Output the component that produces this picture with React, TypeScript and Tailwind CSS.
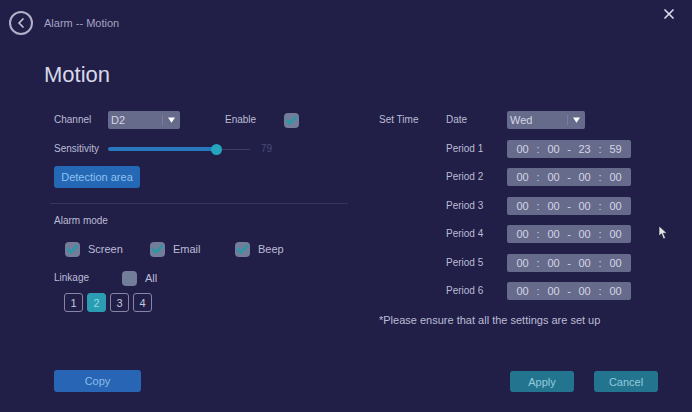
import { useState } from "react"
import type { InputHTMLAttributes } from "react"
import { Check, ChevronLeft, X } from "lucide-react"
import clsx from "clsx"

const days = ["Mon", "Tue", "Wed", "Thu", "Fri", "Sat", "Sun"]
const channels = ["D1", "D2", "D3", "D4"]

const initialPeriods = [
  ["00", "00", "23", "59"],
  ["00", "00", "00", "00"],
  ["00", "00", "00", "00"],
  ["00", "00", "00", "00"],
  ["00", "00", "00", "00"],
  ["00", "00", "00", "00"],
]

const separators = [":", "-", ":"]

function Checkbox(props: InputHTMLAttributes<HTMLInputElement>) {
  return (
    <span className="relative block size-[15px] shrink-0">
      <input type="checkbox" className="peer block size-full appearance-none rounded-[4px] bg-[#727d9a]" {...props} />
      <Check
        className="pointer-events-none absolute inset-0 m-auto hidden size-[13px] text-[#2d97a8] peer-checked:block"
        strokeWidth={5}
      />
    </span>
  )
}

function Select({
  id,
  value,
  options,
  onChange,
  className,
}: {
  id: string
  value: string
  options: string[]
  onChange: (value: string) => void
  className?: string
}) {
  return (
    <div className={clsx("relative", className)}>
      <select
        id={id}
        value={value}
        onChange={(e) => onChange(e.target.value)}
        className="block h-[18px] w-full appearance-none rounded-[2px] bg-[#666a8b] pl-[3px] text-[11px] leading-[18px] text-[#d3d6e6]"
      >
        {options.map((option) => (
          <option key={option}>{option}</option>
        ))}
      </select>
      <span className="pointer-events-none absolute inset-y-1 right-0 flex w-[18px] items-center justify-center border-l border-[#7b7f9e]">
        <svg viewBox="0 0 8 6" className="h-[6px] w-[7px] fill-white">
          <path d="M0 0h8L4 6z" />
        </svg>
      </span>
    </div>
  )
}

export default function App() {
  const [channel, setChannel] = useState("D2")
  const [day, setDay] = useState("Wed")
  const [sensitivity, setSensitivity] = useState(79)
  const [linked, setLinked] = useState([2])
  const [periods, setPeriods] = useState(initialPeriods)

  const toggleLinked = (n: number) => {
    setLinked(linked.includes(n) ? linked.filter((v) => v !== n) : [...linked, n])
  }

  const updatePeriod = (row: number, col: number, value: string) => {
    setPeriods(periods.map((p, r) => (r === row ? p.map((v, c) => (c === col ? value : v)) : p)))
  }

  return (
    <div className="relative flex min-h-screen flex-col bg-[#211f47] font-['Liberation_Sans',Arial,sans-serif] text-[10px] leading-4 text-[#bcbcd6]">
      <header className="flex items-start justify-between pt-[6px] pr-[15px] pl-[9px]">
        <div className="flex items-center gap-[11px] pt-[5px]">
          <button
            aria-label="Back"
            className="flex size-6 items-center justify-center rounded-full border-2 border-[#b0b0cb] text-[#c8c8dd]"
          >
            <ChevronLeft className="mr-px size-4" strokeWidth={2.5} />
          </button>
          <span className="text-[11px] text-[#a5a4c2]">Alarm -- Motion</span>
        </div>
        <button aria-label="Close" className="text-[#dcdcea]">
          <X className="size-4" strokeWidth={2.5} />
        </button>
      </header>

      <h1 className="mt-[26px] ml-11 text-[22px] leading-7 text-[#d8d8ea]">Motion</h1>

      <main className="mt-[22px] flex pr-[34px] pl-[50px]">
        <section className="w-[298px] shrink-0">
          <div className="flex h-[18px] items-center pl-1">
            <label htmlFor="channel" className="w-[54px]">
              Channel
            </label>
            <Select id="channel" className="w-[72px]" value={channel} options={channels} onChange={setChannel} />
            <label htmlFor="enable" className="ml-[45px] w-[59px]">
              Enable
            </label>
            <Checkbox id="enable" defaultChecked />
          </div>

          <div className="mt-3 flex h-4 items-center pl-1">
            <label htmlFor="sensitivity" className="w-[54px]">
              Sensitivity
            </label>
            <span className="relative flex h-4 w-[142px] items-center">
              <span className="h-px w-full bg-[#3d3d6b]" />
              <span
                className="absolute inset-y-[6px] left-0 rounded-full bg-[#2878bd]"
                style={{ width: `${sensitivity}%` }}
              />
              <input
                id="sensitivity"
                type="range"
                value={sensitivity}
                onChange={(e) => setSensitivity(Number(e.target.value))}
                className="absolute inset-0 w-full appearance-none bg-transparent [&::-webkit-slider-thumb]:size-[11px] [&::-webkit-slider-thumb]:appearance-none [&::-webkit-slider-thumb]:rounded-full [&::-webkit-slider-thumb]:bg-[#25a5bd]"
              />
            </span>
            <output htmlFor="sensitivity" className="ml-[11px] text-[#4b4b7c]">
              {sensitivity}
            </output>
          </div>

          <button className="mt-[9px] ml-1 block h-[22px] w-[86px] rounded-[3px] bg-[#2468b6] text-[11px] text-[#8fc0ee]">
            Detection area
          </button>

          <hr className="mt-[15px] border-[#36355f]" />

          <h2 className="mt-[9px] ml-1">Alarm mode</h2>

          <div className="mt-3 flex pl-[15px] text-[11px]">
            {["Screen", "Email", "Beep"].map((mode) => (
              <label key={mode} className="flex w-[85px] items-center gap-2">
                <Checkbox defaultChecked />
                {mode}
              </label>
            ))}
          </div>

          <div className="mt-[13px] flex items-center pl-1">
            <span className="w-[68px]">Linkage</span>
            <label className="flex items-center gap-2 text-[11px]">
              <Checkbox />
              All
            </label>
          </div>

          <div className="mt-[7px] flex gap-1 pl-[14px]">
            {[1, 2, 3, 4].map((n) => (
              <button
                key={n}
                aria-pressed={linked.includes(n)}
                onClick={() => toggleLinked(n)}
                className={clsx(
                  "size-[19px] rounded-[3px] border text-[11px] leading-4",
                  linked.includes(n)
                    ? "border-[#2b9db3] bg-[#2b9db3] text-[#8fdbe6]"
                    : "border-[#8685a5] text-[#c6c6dc]",
                )}
              >
                {n}
              </button>
            ))}
          </div>
        </section>

        <section className="ml-[31px]">
          <div className="flex">
            <h2 className="w-[67px] leading-[18px]">Set Time</h2>
            <div className="flex min-h-[189px] flex-col justify-between">
              <div className="flex items-center">
                <label htmlFor="day" className="w-[61px]">
                  Date
                </label>
                <Select id="day" className="w-[78px]" value={day} options={days} onChange={setDay} />
              </div>
              {periods.map((period, row) => (
                <div key={row} className="flex items-center">
                  <span className="w-[61px]">Period {row + 1}</span>
                  <div className="flex h-[18px] items-center rounded-[2px] bg-[#666a8b] px-2 text-[11px] text-[#d3d6e6]">
                    {period.map((value, col) => (
                      <div key={col} className="flex items-center">
                        {col > 0 && <span className="w-4 text-center">{separators[col - 1]}</span>}
                        <input
                          aria-label={`Period ${row + 1} ${col < 2 ? "start" : "end"} ${col % 2 ? "minute" : "hour"}`}
                          value={value}
                          maxLength={2}
                          onChange={(e) => updatePeriod(row, col, e.target.value)}
                          className="w-[15px] text-center"
                        />
                      </div>
                    ))}
                  </div>
                </div>
              ))}
            </div>
          </div>
          <p className="mt-3 text-[11px]">*Please ensure that all the settings are set up</p>
        </section>
      </main>

      <footer className="mt-auto flex items-end pr-[34px] pb-5 pl-[54px] text-[11px]">
        <button className="mr-auto h-[22px] w-[87px] rounded-[3px] bg-[#2865b4] text-[#8cbbe8]">Copy</button>
        <button className="h-[21px] w-16 rounded-[3px] bg-[#23748f] text-[#93cbd9]">Apply</button>
        <button className="ml-5 h-[21px] w-16 rounded-[3px] bg-[#23748f] text-[#93cbd9]">Cancel</button>
      </footer>

      {/* Pointer */}
      <svg viewBox="0 0 10 14" className="pointer-events-none absolute top-[226px] left-[658px] h-[14px] w-[10px]">
        <path d="M1 0v10l2.5-2.3L5.5 13l2-.9L5.4 7.2H9z" fill="#e4e4e4" stroke="#15142e" strokeWidth="0.6" />
      </svg>
    </div>
  )
}
